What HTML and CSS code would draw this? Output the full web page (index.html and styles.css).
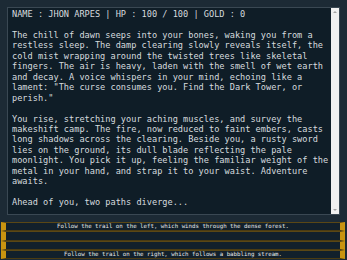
FILE: index.html
```html
<!DOCTYPE html>
<html lang="en">
<head>
  <meta charset="UTF-8">
  <meta name="viewport" content="width=device-width, initial-scale=1.0">
  <title>Dark Tower</title>
  <link rel="stylesheet" href="styles.css">
</head>
<body>
  <div id="screen">
    <div id="story">
      <div class="story-text">NAME : JHON ARPES | HP : 100 / 100 | GOLD : 0

The chill of dawn seeps into your bones, waking you from a
restless sleep. The damp clearing slowly reveals itself, the
cold mist wrapping around the twisted trees like skeletal
fingers. The air is heavy, laden with the smell of wet earth
and decay. A voice whispers in your mind, echoing like a
lament: "The curse consumes you. Find the Dark Tower, or
perish."

You rise, stretching your aching muscles, and survey the
makeshift camp. The fire, now reduced to faint embers, casts
long shadows across the clearing. Beside you, a rusty sword
lies on the ground, its dull blade reflecting the pale
moonlight. You pick it up, feeling the familiar weight of the
metal in your hand, and strap it to your waist. Adventure
awaits.

Ahead of you, two paths diverge...</div>
      <div class="scrollbar">
        <span class="arrow up"></span>
        <span class="arrow down"></span>
      </div>
    </div>
  </div>
  <div class="choices">
    <button class="choice">Follow the trail on the left, which winds through the dense forest.</button>
    <button class="choice"></button>
    <button class="choice"></button>
    <button class="choice">Follow the trail on the right, which follows a babbling stream.</button>
  </div>
</body>
</html>
```

FILE: styles.css
```css
body {
  margin: 0;
  width: 347px;
  height: 260px;
  overflow: hidden;
  background: #1c2a35;
  font-family: 'DejaVu Sans Mono', 'Liberation Mono', monospace;
}

#screen {
  padding: 7px 7px 7px 7px;
  height: 208px;
}

#story {
  height: 206px;
  display: flex;
  border: 1px solid #3a4853;
  background: #0f1d27;
}

.story-text {
  flex: 1;
  padding: 1px 4px;
  white-space: pre;
  overflow: hidden;
  font-size: 8.62px;
  line-height: 10.45px;
  color: #d6dbdf;
}

.scrollbar {
  width: 8px;
  background: #f0f0f0;
  display: flex;
  flex-direction: column;
  justify-content: space-between;
  align-items: center;
  padding: 3px 0;
}

.arrow {
  width: 0;
  height: 0;
  border-left: 2px solid transparent;
  border-right: 2px solid transparent;
}

.arrow.up {
  border-bottom: 2px solid #a3a3a3;
}

.arrow.down {
  border-top: 2px solid #a3a3a3;
}

.choices {
  display: flex;
  flex-direction: column;
  margin: 0 2px 0 1px;
}

.choice {
  height: 9.25px;
  padding: 0;
  border: none;
  border-top: 1px solid #5a4715;
  border-bottom: 1px solid #4a3b12;
  border-left: 5px solid #c99410;
  border-right: 5px solid #c99410;
  background: #12202b;
  color: #e8e8e8;
  font-family: 'DejaVu Sans Mono', 'Liberation Mono', monospace;
  font-size: 5.75px;
  line-height: 7px;
  text-align: center;
  cursor: pointer;
}
```
